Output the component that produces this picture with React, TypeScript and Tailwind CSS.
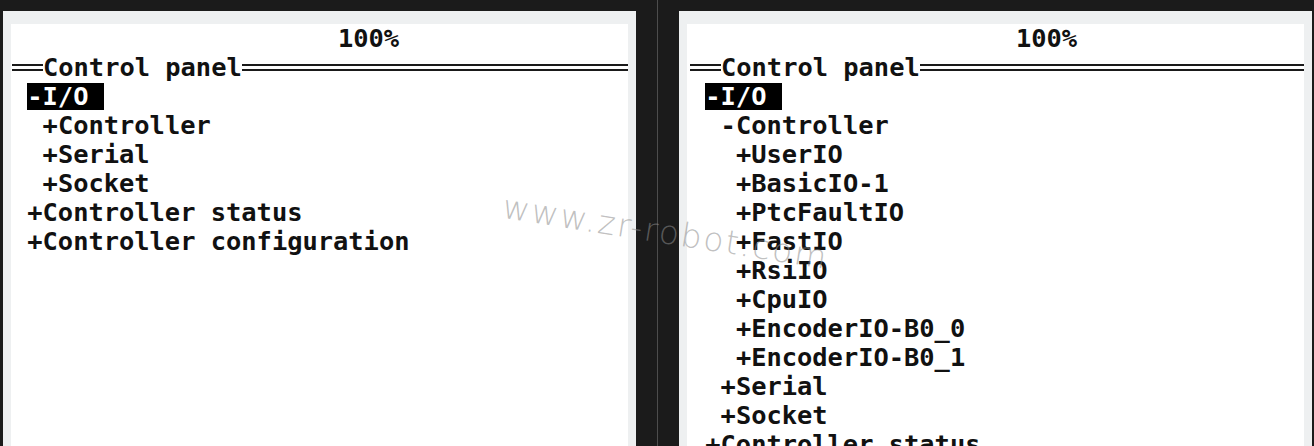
type Row = { text: string; indent: number; selected?: boolean };

const leftRows: Row[] = [
  { text: "-I/O", indent: 1, selected: true },
  { text: "+Controller", indent: 2 },
  { text: "+Serial", indent: 2 },
  { text: "+Socket", indent: 2 },
  { text: "+Controller status", indent: 1 },
  { text: "+Controller configuration", indent: 1 },
];

const rightRows: Row[] = [
  { text: "-I/O", indent: 1, selected: true },
  { text: "-Controller", indent: 2 },
  { text: "+UserIO", indent: 3 },
  { text: "+BasicIO-1", indent: 3 },
  { text: "+PtcFaultIO", indent: 3 },
  { text: "+FastIO", indent: 3 },
  { text: "+RsiIO", indent: 3 },
  { text: "+CpuIO", indent: 3 },
  { text: "+EncoderIO-B0_0", indent: 3 },
  { text: "+EncoderIO-B0_1", indent: 3 },
  { text: "+Serial", indent: 2 },
  { text: "+Socket", indent: 2 },
  { text: "+Controller status", indent: 1 },
];

const indentClass = ["pl-0", "pl-[15.3px]", "pl-[30.6px]", "pl-[45.9px]"];

function DoubleRule({ className }: { className: string }) {
  return <div className={`h-[7px] border-y-2 border-[#1a1a1a] ${className}`} />;
}

function Terminal({ rows, inset }: { rows: Row[]; inset: string }) {
  return (
    <div className="mt-[11px] flex w-[633px] flex-col bg-[#eef0f1] px-[8px] pt-[13px]">
      <div className={`flex-1 bg-white ${inset} font-['DejaVu_Sans_Mono',monospace] text-[25.4px] font-bold text-[#111]`}>
        <div className="flex h-[29px] items-center pl-[326px] leading-none">100%</div>
        <div className="flex h-[29px] items-center leading-none">
          <DoubleRule className="w-[31px]" />
          <span className="whitespace-pre">Control panel</span>
          <DoubleRule className="flex-1" />
        </div>
        {rows.map((row, i) => (
          <div key={i} className={`flex h-[29px] items-center leading-none ${indentClass[row.indent]}`}>
            {row.selected ? (
              <span className="flex h-[27px] w-[76.5px] items-center bg-black text-white">{row.text}</span>
            ) : (
              <span className="whitespace-pre">{row.text}</span>
            )}
          </div>
        ))}
      </div>
    </div>
  );
}

export default function App() {
  return (
    <div className="relative flex h-[446px] w-[1314px] overflow-hidden bg-[#1b1b1b] pl-[3px]">
      <Terminal rows={leftRows} inset="pl-px" />
      <div className="flex w-[43px] justify-center">
        <div className="w-px bg-[#4d4d4d]" />
      </div>
      <Terminal rows={rightRows} inset="pl-[3px]" />
      <div className="pointer-events-none absolute left-[507px] top-[182px] origin-top-left rotate-[9deg] whitespace-nowrap font-['DejaVu_Sans',sans-serif] text-[33px] font-light tracking-[2px] text-[#8c8c8c]/55">
        www.zr-robot.com
      </div>
    </div>
  );
}
